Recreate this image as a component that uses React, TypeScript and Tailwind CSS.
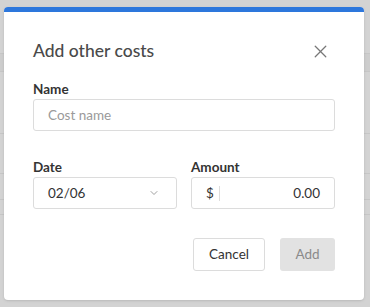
import { ChevronDown, X } from 'lucide-react';

export default function App() {
  return (
    <div
      className="relative h-[307px] w-[370px] overflow-hidden bg-[#d3d3d3]"
      style={{ fontFamily: 'Lato, "Open Sans", sans-serif' }}
    >
      {/* faint page rows behind the overlay */}
      <div className="absolute inset-x-0 top-[53px] h-[19px] border-y border-[#c6c6c6] bg-[#cdcdcd]" />
      <div className="absolute inset-x-0 top-[133px] border-t border-[#c6c6c6]" />
      <div className="absolute inset-x-0 top-[173px] border-t border-[#c6c6c6]" />
      <div className="absolute inset-x-0 top-[199px] border-t border-[#c6c6c6]" />
      <div className="absolute inset-x-0 top-[214px] border-t border-[#c6c6c6]" />

      {/* Modal */}
      <div className="absolute left-[4px] top-[7px] w-[360px] overflow-hidden rounded-[4px] bg-white shadow-sm">
        <div className="h-[5px] bg-[#2d77dc]" />
        <div className="px-[29px] pb-[29px]">
          <div className="flex h-[69px] items-center justify-between pt-[9px]">
            <h2 className="text-[17.5px] font-medium text-[#4a4a4a]">Add other costs</h2>
            <X className="mr-[4px] h-[21px] w-[21px] text-[#777]" strokeWidth={1.5} />
          </div>

          <label className="block text-[13.5px] font-bold leading-[16px] text-[#333]">Name</label>
          <div className="mt-[2px] flex h-[32px] items-center rounded-[3px] border border-[#dcdcdc] px-[14px] text-[13.5px] text-[#9a9a9a]">
            Cost name
          </div>

          <div className="mt-[28px] flex gap-[14px]">
            <div className="flex-1">
              <label className="block text-[13.5px] font-bold leading-[16px] text-[#333]">Date</label>
              <div className="mt-[2px] flex h-[32px] items-center justify-between rounded-[3px] border border-[#dcdcdc] pl-[14px] pr-[16px] text-[13.5px] text-[#333]">
                <span>02/06</span>
                <ChevronDown className="h-[12px] w-[12px] text-[#888]" strokeWidth={1.6} />
              </div>
            </div>
            <div className="flex-1">
              <label className="block text-[13.5px] font-bold leading-[16px] text-[#333]">Amount</label>
              <div className="mt-[2px] flex h-[32px] items-center rounded-[3px] border border-[#dcdcdc] pl-[14px] pr-[14px] text-[13.5px] text-[#333]">
                <span>$</span>
                <span className="ml-[5px] h-[15px] border-l border-[#ddd]" />
                <span className="ml-auto">0.00</span>
              </div>
            </div>
          </div>

          <div className="mt-[29px] flex justify-end gap-[15px]">
            <button className="h-[33px] w-[72px] rounded-[3px] border border-[#dcdcdc] bg-white text-[13.5px] text-[#333]">
              Cancel
            </button>
            <button className="h-[33px] w-[55px] rounded-[3px] bg-[#e2e2e2] text-[13.5px] text-[#8a8a8a]">
              Add
            </button>
          </div>
        </div>
      </div>
    </div>
  );
}
